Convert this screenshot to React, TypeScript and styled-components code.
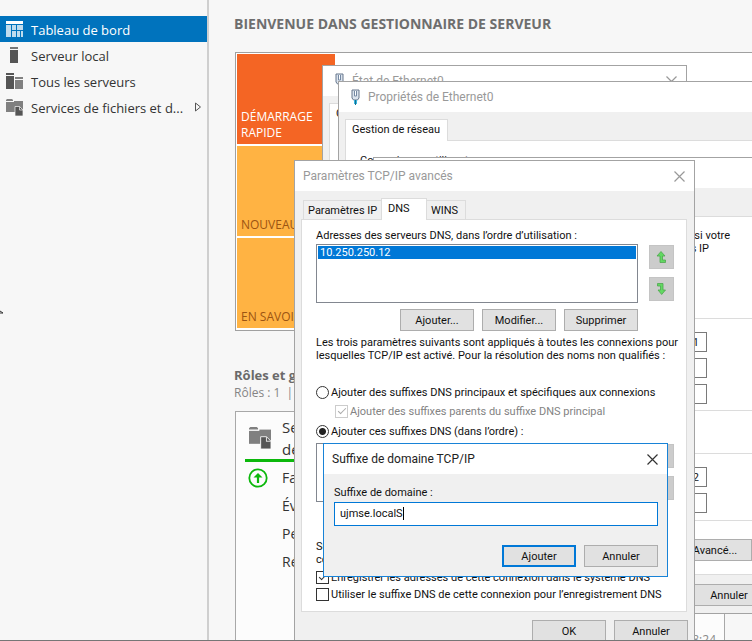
import React from 'react';
import styled, { createGlobalStyle } from 'styled-components';

const shell = '"Open Sans", "Noto Sans", sans-serif';
const dialog = 'Roboto, "DejaVu Sans Condensed", sans-serif';

const Global = createGlobalStyle`
  *, *::before, *::after { box-sizing: border-box; }
  html, body { margin: 0; }
  body { background: #f7f7f7; font: 13px/16px ${shell}; color: #333; }
  h1, h2, h3, p, ul { margin: 0; padding: 0; font-weight: normal; }
  button, input { font: inherit; color: inherit; }
`;

/* ---------- Server manager ---------- */

const Desktop = styled.div`
  position: relative;
  display: flex;
  height: 100vh;
  overflow: hidden;
  border-bottom: 1px solid #767676;
`;

const Sidebar = styled.nav`
  flex: none;
  width: 209px;
  padding-top: 16px;
  border-right: 2px solid #cfcfcf;
`;

const NavItem = styled.a<{ $active?: boolean }>`
  display: flex;
  align-items: center;
  gap: 8px;
  height: 26px;
  padding-left: 6px;
  color: ${p => (p.$active ? '#fff' : '#333')};
  background: ${p => (p.$active ? '#0073bd' : 'transparent')};
  text-decoration: none;
  white-space: nowrap;
  > svg { flex: none; }
  > span { flex: 1; padding-top: 2px; }
`;

const Pointer = styled.svg`
  position: absolute;
  left: 0;
  top: 309px;
`;

const Main = styled.main`
  flex: 1;
  min-width: 0;
  display: flex;
  flex-direction: column;
  padding: 16px 0 0 25px;
`;

const PageTitle = styled.h1`
  font-size: 14px;
  font-weight: bold;
  color: #6e6e6e;
  white-space: nowrap;
`;

const Welcome = styled.section`
  margin-top: 20px;
  margin-left: 1px;
  padding: 1px 1px 2px;
  background: #fff;
  border: 1px solid #a0a0a0;
  border-right: 0;
`;

const Tiles = styled.div`
  display: flex;
  flex-direction: column;
  gap: 2px;
  width: 98px;
`;

const Tile = styled.button<{ $accent?: boolean }>`
  display: flex;
  align-items: flex-end;
  height: 90px;
  padding: 0 4px 3px;
  border: 0;
  text-align: left;
  white-space: ${p => (p.$accent ? 'normal' : 'nowrap')};
  font-size: 12px;
  color: ${p => (p.$accent ? '#fff' : '#9c5412')};
  background: ${p => (p.$accent ? '#f46524' : '#ffb343')};
`;

const RolesTitle = styled.h2`
  margin-top: 36px;
  font-size: 13px;
  font-weight: bold;
  color: #6a6a6a;
  white-space: nowrap;
`;

const RolesCount = styled.p`
  margin-top: 2px;
  font-size: 12px;
  color: #858585;
`;

const Cards = styled.div`
  flex: 1;
  display: grid;
  grid-template-columns: 1fr 1fr;
  gap: 10px;
  margin: 10px 27px 0 1px;
`;

const Card = styled.article`
  display: flex;
  flex-direction: column;
  background: #fcfcfc;
  border: 1px solid #a8a8a8;
  border-bottom: 0;
`;

const CardHead = styled.header`
  display: grid;
  grid-template-columns: 37px 1fr;
  align-items: center;
  height: 50px;
  margin: 0 0 2px 9px;
  padding-top: 4px;
  border-bottom: 3px solid #0cb80c;
  line-height: 22px;
  > svg { margin-left: 4px; }
  h3 { font-size: 15px; white-space: nowrap; }
`;

const CardRow = styled.div`
  display: grid;
  grid-template-columns: 37px 1fr;
  align-items: center;
  height: 28px;
  margin-left: 9px;
  font-size: 14px;
  > span { grid-column: 2; }
  > svg { margin-left: 3px; }
`;

const Stamp = styled.time`
  margin-top: auto;
  margin-bottom: -8px;
  padding-right: 8px;
  text-align: right;
  font-size: 12px;
  color: #8a8a8a;
`;

/* ---------- Windows ---------- */

const Window = styled.section<{ $x: number; $y: number; $w: number; $h: number; $active?: boolean }>`
  position: absolute;
  isolation: isolate;
  left: ${p => p.$x}px;
  top: ${p => p.$y}px;
  width: ${p => p.$w}px;
  height: ${p => p.$h}px;
  display: flex;
  flex-direction: column;
  background: #f0f0f0;
  border: 1px solid ${p => (p.$active ? '#1883d7' : '#a3a3a3')};
  color: #111;
  font: 11px/13px ${dialog};
`;

const TitleBar = styled.header<{ $active?: boolean }>`
  display: flex;
  align-items: center;
  flex: none;
  height: 30px;
  gap: 4px;
  padding: 0 9px 0 8px;
  background: #fff;
  color: ${p => (p.$active ? '#222' : '#999')};
  font-size: 12px;
  line-height: 16px;
  white-space: nowrap;
  h2 { flex: 1; font-size: 12px; }
`;

const IconSlot = styled.span`
  display: flex;
  justify-content: center;
  width: 17px;
`;

const CloseButton = styled.button`
  display: flex;
  padding: 0;
  border: 0;
  background: none;
`;

const TabStrip = styled.div`
  display: flex;
  align-items: flex-end;
  flex: none;
  height: 28px;
  padding: 0 8px;
`;

const Tab = styled.button<{ $selected?: boolean; $w: number }>`
  position: relative;
  width: ${p => p.$w}px;
  height: ${p => (p.$selected ? 22 : 19)}px;
  margin: ${p => (p.$selected ? '0 -1px -1px -2px' : '0 -1px 0 0')};
  padding: ${p => (p.$selected ? '0 0 2px 6px' : '0 0 0 4px')};
  border: 1px solid #dcdcdc;
  border-bottom: 0;
  background: ${p => (p.$selected ? '#fff' : '#f0f0f0')};
  z-index: ${p => (p.$selected ? 1 : 0)};
  text-align: left;
  white-space: nowrap;
`;

const TabPanel = styled.div`
  flex: 1;
  min-height: 0;
  display: flex;
  flex-direction: column;
  margin: 0 7px 0 6px;
  padding: 9px 14px 0;
  background: #fff;
  border: 1px solid #dcdcdc;
`;

const Button = styled.button<{ $primary?: boolean }>`
  width: 74px;
  height: 22px;
  padding: 0;
  border: ${p => (p.$primary ? '2px solid #0078d7' : '1px solid #adadad')};
  background: #e1e1e1;
  white-space: nowrap;
`;

const ButtonRow = styled.div<{ $top?: number; $right?: number; $bottom?: number }>`
  display: flex;
  justify-content: flex-end;
  flex: none;
  gap: 8px;
  padding: ${p => p.$top ?? 0}px ${p => p.$right ?? 0}px ${p => p.$bottom ?? 0}px 0;
`;

const ListRow = styled.div<{ $top?: number }>`
  display: flex;
  flex: none;
  gap: 11px;
  margin-top: ${p => p.$top ?? 0}px;
`;

const ListBox = styled.ul`
  flex: 1;
  height: 59px;
  padding: 1px;
  list-style: none;
  border: 1px solid #828790;
`;

const ListItem = styled.li`
  padding: 0 2px;
  background: #0078d7;
  color: #fff;
`;

const Movers = styled.div`
  display: flex;
  flex-direction: column;
  gap: 8px;
  padding-top: 1px;
  margin-right: -2px;
`;

const Mover = styled.button`
  display: flex;
  align-items: center;
  justify-content: center;
  width: 25px;
  height: 24px;
  padding: 0;
  border: 1px solid #c4c4c4;
  background: #ccc;
`;

const Note = styled.p<{ $top: number }>`
  margin-top: ${p => p.$top}px;
  white-space: nowrap;
`;

const Option = styled.label<{ $top: number; $indent?: number; $disabled?: boolean }>`
  display: flex;
  align-items: center;
  flex: none;
  gap: 2px;
  height: 13px;
  margin-top: ${p => p.$top}px;
  margin-left: ${p => p.$indent ?? 0}px;
  color: ${p => (p.$disabled ? '#838383' : 'inherit')};
  white-space: nowrap;
`;

const Radio = styled.input.attrs({ type: 'radio' })`
  appearance: none;
  flex: none;
  width: 13px;
  height: 13px;
  margin: 0;
  border: 1px solid #333;
  border-radius: 50%;
  background: #fff;
  &:checked { background: radial-gradient(circle, #222 3px, #fff 4px); }
`;

const Check = styled.input.attrs({ type: 'checkbox' })`
  appearance: none;
  flex: none;
  width: 13px;
  height: 13px;
  margin: 0;
  border: 1px solid #333;
  background: #fff;
  &:disabled { border-color: #ccc; }
  &:checked::before {
    content: '';
    display: block;
    width: 8px;
    height: 4px;
    margin: 2px 0 0 2px;
    border: solid #333;
    border-width: 0 0 1px 1px;
    transform: rotate(-45deg);
  }
  &:disabled:checked::before { border-color: #aaa; }
`;

const Form = styled.form`
  display: flex;
  flex-direction: column;
  padding: 12px 9px 0 10px;
`;

const Field = styled.div`
  display: flex;
  align-items: center;
  height: 24px;
  margin-top: 3px;
  padding: 0 5px 2px;
  border: 1px solid #0078d7;
  background: #fff;
`;

const FieldInput = styled.input`
  field-sizing: content;
  padding: 0;
  border: 0;
  outline: 0;
  background: none;
`;

const Caret = styled.span`
  width: 1px;
  height: 13px;
  background: #000;
`;

const SideBody = styled(TabPanel)`
  align-items: flex-end;
  padding: 12px 0 0;
  overflow: hidden;
`;

const SideText = styled.p<{ $inset: number }>`
  padding-right: ${p => p.$inset}px;
  white-space: nowrap;
`;

const Group = styled.div<{ $top: number; $pad: number }>`
  align-self: stretch;
  display: flex;
  flex-direction: column;
  align-items: flex-end;
  gap: 6px;
  margin-top: ${p => p.$top}px;
  padding: ${p => p.$pad}px 57px 0 0;
  border-top: 1px solid #dcdcdc;
`;

const AddressInput = styled.input`
  width: 140px;
  height: 20px;
  padding: 0 7px;
  border: 1px solid #7a7a7a;
  background: #fff;
  text-align: right;
`;

/* ---------- Icons ---------- */

const DashboardIcon = () => (
  <svg width="17" height="16" viewBox="0 0 17 16" fill="#fff">
    <path d="M0 0h17v3H0z" />
    <path d="M0 4h5v12H0zM6 4h4v5H6zM6 10h4v6H6zM11 4h6v5h-6zM11 10h3v6h-3zM15 10h2v6h-2z" opacity=".75" />
  </svg>
);
const ServerIcon = () => (
  <svg width="17" height="16" viewBox="0 0 17 16" fill="#555">
    <path d="M4 0h8v2H4z" fill="#777" /><path d="M4 3h8v13H4z" />
  </svg>
);
const ServersIcon = () => (
  <svg width="17" height="16" viewBox="0 0 17 16">
    <path d="M0 0h8v2H0zM0 3h8v13H0z" fill="#555" />
    <path d="M9 4h8v2H9zM9 7h8v9H9z" fill="#808080" />
  </svg>
);
const FilesIcon = ({ size = 17 }: { size?: number }) => (
  <svg width={size} height={size} viewBox="0 0 17 17">
    <path d="M0 1l1-1h5l1 1v1H0z" fill="#808080" />
    <path d="M0 3h9v10H0z" fill="#808080" />
    <path d="M8 2h9v9H8z" fill="#808080" />
    <path d="M9 7.500h4.500L17 11v6H9z" fill="#555" stroke="#f7f7f7" strokeWidth=".7" />
    <path d="M13.500 7.500V11H17" fill="none" stroke="#ddd" strokeWidth=".8" />
  </svg>
);
const ExpandIcon = () => (
  <svg width="18" height="10" viewBox="0 0 18 10" fill="none" stroke="#555">
    <path d="M4.500 1v8l5-4z" />
  </svg>
);
const UpBadge = () => (
  <svg width="20" height="20" viewBox="0 0 20 20" fill="none" stroke="#0cb80c">
    <circle cx="10" cy="10" r="8.700" strokeWidth="1.800" />
    <path d="M10 15V7" strokeWidth="2.200" />
    <path d="M5.500 9.500L10 5l4.500 4.500z" fill="#0cb80c" stroke="none" />
  </svg>
);
const CloseIcon = ({ color = '#999' }: { color?: string }) => (
  <svg width="11" height="11" viewBox="0 0 11 11" stroke={color} strokeWidth="1.200">
    <path d="M.5.5l10 10M10.500.5l-10 10" />
  </svg>
);
const EthernetIcon = () => (
  <IconSlot>
    <svg width="9" height="16" viewBox="0 0 9 16">
      <path d="M1 1h7v8L6.500 11h-4L1 9z" fill="#dce4ee" stroke="#66778c" />
      <path d="M3.500 2v5h2V2" fill="#fff" stroke="#7488a2" />
      <path d="M3 11h3v4H3z" fill="#35b5e0" />
      <path d="M4.500 11v5" stroke="#16708f" />
    </svg>
  </IconSlot>
);
const MoveIcon = ({ down }: { down?: boolean }) => (
  <svg width="11" height="14" viewBox="0 0 11 14">
    <path
      d={down ? 'M1.500 1.500h5.500V8h2.500L5.700 12.500 2 8h2.500V4h-3z' : 'M5 1.500L9 6H6.500v4h3v2.500H4V6H1z'}
      fill="#62d962" stroke="#4fa64f" strokeWidth=".8"
    />
  </svg>
);

const Close = ({ color }: { color?: string }) => (
  <CloseButton type="button" aria-label="Fermer"><CloseIcon color={color} /></CloseButton>
);

/* ---------- Window contents ---------- */

const Ipv4Panel = () => (
  <SideBody>
    <SideText $inset={34}>Les paramètres IP peuvent être déterminés automatiquement si votre</SideText>
    <SideText $inset={55}>réseau le permet. Sinon, vous devez demander les paramètres IP</SideText>
    <Group $top={63} $pad={13}>
      <AddressInput aria-label="Adresse IP" defaultValue="1" />
      <AddressInput aria-label="Masque de sous-réseau" />
      <AddressInput aria-label="Passerelle par défaut" />
    </Group>
    <Group $top={6} $pad={0} />
    <Group $top={42} $pad={13}>
      <AddressInput aria-label="Serveur DNS préféré" defaultValue="2" />
      <AddressInput aria-label="Serveur DNS auxiliaire" />
    </Group>
    <Group $top={7} $pad={0} />
    <ButtonRow $top={18} $right={12}><Button type="button">Avancé...</Button></ButtonRow>
  </SideBody>
);

const DnsPanel = () => (
  <TabPanel>
    <Note $top={0}>Adresses des serveurs DNS, dans l’ordre d’utilisation :</Note>
    <ListRow $top={2}>
      <ListBox><ListItem>10.250.250.12</ListItem></ListBox>
      <Movers>
        <Mover aria-label="Monter"><MoveIcon /></Mover>
        <Mover aria-label="Descendre"><MoveIcon down /></Mover>
      </Movers>
    </ListRow>
    <ButtonRow $top={6} $right={34}>
      <Button>Ajouter...</Button><Button>Modifier...</Button><Button>Supprimer</Button>
    </ButtonRow>
    <Note $top={5}>
      Les trois paramètres suivants sont appliqués à toutes les connexions pour<br />
      lesquelles TCP/IP est activé. Pour la résolution des noms non qualifiés :
    </Note>
    <Option $top={24}><Radio name="mode" />Ajouter des suffixes DNS principaux et spécifiques aux connexions</Option>
    <Option $top={6} $indent={19} $disabled>
      <Check defaultChecked disabled />Ajouter des suffixes parents du suffixe DNS principal
    </Option>
    <Option $top={7}><Radio name="mode" defaultChecked />Ajouter ces suffixes DNS (dans l’ordre) :</Option>
    <ListRow $top={5}>
      <ListBox />
      <Movers>
        <Mover aria-label="Monter le suffixe" /><Mover aria-label="Descendre le suffixe" />
      </Movers>
    </ListRow>
    <Note $top={38}>Suffixe DNS pour cette<br />connexion :</Note>
    <Option $top={5}><Check defaultChecked />Enregistrer les adresses de cette connexion dans le système DNS</Option>
    <Option $top={4}><Check />Utiliser le suffixe DNS de cette connexion pour l’enregistrement DNS</Option>
  </TabPanel>
);

export default function App() {
  return (
    <>
      <Global />
      <Desktop>
        <Sidebar>
          <NavItem href="#" $active><DashboardIcon /><span>Tableau de bord</span></NavItem>
          <NavItem href="#"><ServerIcon /><span>Serveur local</span></NavItem>
          <NavItem href="#"><ServersIcon /><span>Tous les serveurs</span></NavItem>
          <NavItem href="#"><FilesIcon /><span>Services de fichiers et d...</span><ExpandIcon /></NavItem>
        </Sidebar>
        <Main>
          <PageTitle>BIENVENUE DANS GESTIONNAIRE DE SERVEUR</PageTitle>
          <Welcome>
            <Tiles>
              <Tile $accent>DÉMARRAGE RAPIDE</Tile>
              <Tile>NOUVEAUTÉS</Tile>
              <Tile>EN SAVOIR PLUS</Tile>
            </Tiles>
          </Welcome>
          <RolesTitle>Rôles et groupes de serveurs</RolesTitle>
          <RolesCount>Rôles : 1 &nbsp;| &nbsp;Groupes de serveurs : 1</RolesCount>
          <Cards>
            <Card>
              <CardHead><FilesIcon size={22} /><h3>Services de fichiers et<br />de stockage</h3></CardHead>
              <CardRow><UpBadge /><span>Facilité de gestion</span></CardRow>
              <CardRow><span>Événements</span></CardRow>
              <CardRow><span>Performances</span></CardRow>
              <CardRow><span>Résultats BPA</span></CardRow>
            </Card>
            <Card><Stamp>18:24</Stamp></Card>
          </Cards>
        </Main>
        <Pointer width="4" height="6" viewBox="0 0 4 6">
          <path d="M0 2l3 2H0" fill="#fff" stroke="#333" />
        </Pointer>

        <Window $x={322} $y={65} $w={365} $h={440}>
          <TitleBar><EthernetIcon /><h2>État de Ethernet0</h2><Close /></TitleBar>
          <TabStrip><Tab $w={60} $selected>Général</Tab></TabStrip>
          <TabPanel />
        </Window>

        <Window $x={338} $y={81} $w={440} $h={480}>
          <TitleBar><EthernetIcon /><h2>Propriétés de Ethernet0</h2></TitleBar>
          <TabStrip><Tab $w={103} $selected>Gestion de réseau</Tab></TabStrip>
          <TabPanel><Note $top={4}>Connexion en utilisant :</Note></TabPanel>
        </Window>

        <Window $x={373} $y={157} $w={400} $h={457}>
          <TitleBar><h2>Propriétés de : Protocole Internet version 4</h2></TitleBar>
          <TabStrip />
          <Ipv4Panel />
          <ButtonRow $top={9} $right={6} $bottom={7}>
            <Button type="button">OK</Button><Button type="button">Annuler</Button>
          </ButtonRow>
        </Window>

        <Window $x={294} $y={160} $w={401} $h={500}>
          <TitleBar><h2>Paramètres TCP/IP avancés</h2><Close /></TitleBar>
          <TabStrip>
            <Tab $w={81}>Paramètres IP</Tab>
            <Tab $w={46} $selected>DNS</Tab>
            <Tab $w={40}>WINS</Tab>
          </TabStrip>
          <DnsPanel />
          <ButtonRow $top={8} $right={6} $bottom={17}>
            <Button type="button">OK</Button><Button type="button">Annuler</Button>
          </ButtonRow>
        </Window>

        <Window $x={323} $y={443} $w={345} $h={134} $active role="dialog">
          <TitleBar $active><h2>Suffixe de domaine TCP/IP</h2><Close color="#333" /></TitleBar>
          <Form>
            <label htmlFor="suffix">Suffixe de domaine :</label>
            <Field><FieldInput id="suffix" defaultValue="ujmse.localS" spellCheck={false} /><Caret /></Field>
            <ButtonRow $top={19}>
              <Button type="button" $primary>Ajouter</Button><Button type="button">Annuler</Button>
            </ButtonRow>
          </Form>
        </Window>
      </Desktop>
    </>
  );
}
